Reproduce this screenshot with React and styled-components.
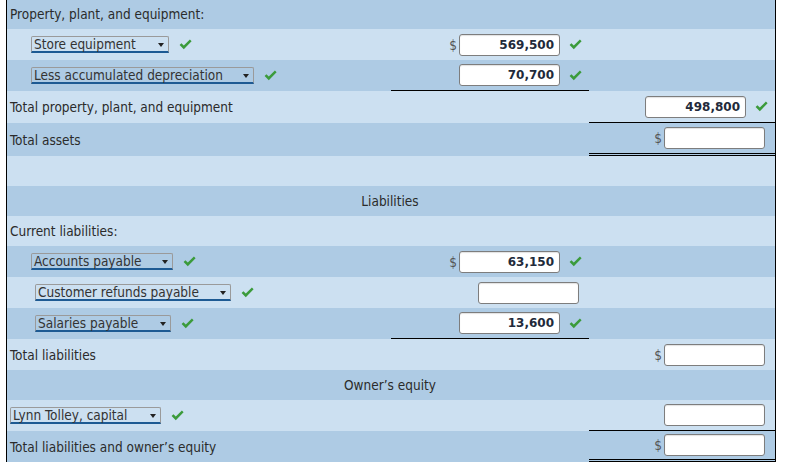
import React from 'react';
import styled, { createGlobalStyle } from 'styled-components';

const GlobalStyle = createGlobalStyle`
  body {
    margin: 0;
    background: #ffffff;
    font-family: "DejaVu Sans Condensed", "DejaVu Sans", sans-serif;
    font-size: 13.5px;
    color: #2b2b2b;
  }
`;

const DARK = '#aecbe4';
const LIGHT = '#cce0f1';

const Sheet = styled.div`
  width: 770px;
  margin: -2px 0 0 6px;
  border-left: 1px solid #000;
  border-right: 1px solid #000;
  box-sizing: border-box;
`;

const Row = styled.div`
  display: grid;
  grid-template-columns: 384px 198px 186px;
  height: ${props => props.$h}px;
  background: ${props => (props.$dark ? DARK : LIGHT)};
`;

const Heading = styled.div`
  grid-column: 1 / span 3;
  display: flex;
  align-items: center;
  justify-content: center;
  padding-right: 2px;
`;

const LabelCell = styled.div`
  display: flex;
  align-items: center;
  padding-left: ${props => props.$indent}px;
  white-space: nowrap;
`;

const AmountCell = styled.div`
  display: flex;
  align-items: center;
  justify-content: flex-end;
  box-sizing: border-box;
  padding-right: ${props => (props.$checked ? 7 : 10)}px;
  border-bottom: ${props =>
    props.$rule === 'double' ? '3px double #000' : props.$rule === 'single' ? '1px solid #000' : 'none'};
`;

const Dropdown = styled.div`
  position: relative;
  width: ${props => props.$w}px;
  height: 17px;
  box-sizing: border-box;
  padding: 0 14px 0 2px;
  display: flex;
  align-items: center;
  border: 1px solid #9a9a9a;
  border-bottom: 2px solid #1d5a93;
  border-radius: 2px 2px 0 0;
  color: #333;
  line-height: 15px;

  &::after {
    content: '';
    position: absolute;
    right: 4px;
    top: 6px;
    border-left: 3px solid transparent;
    border-right: 3px solid transparent;
    border-top: 4px solid #222;
  }
`;

const Dollar = styled.span`
  color: #555;
  margin-right: 2px;
`;

const Field = styled.div`
  width: 101px;
  height: 22px;
  box-sizing: border-box;
  background: #fff;
  border: 1px solid #7d7d7d;
  border-radius: 3px;
  box-shadow: inset 0 1px 1px rgba(0, 0, 0, 0.12);
  display: flex;
  align-items: center;
  justify-content: flex-end;
  padding-right: 5px;
  font-family: "DejaVu Sans", sans-serif;
  font-size: 12px;
  font-weight: bold;
  color: #222a3a;
`;

const CheckMark = styled.svg`
  width: 13px;
  height: 11px;
  margin-left: ${props => props.$gap}px;
  flex: none;
`;

const Check = ({ gap = 10 }) => (
  <CheckMark $gap={gap} viewBox="0 0 13 11">
    <path d="M0.6 6 L2.4 4.2 L4.8 6.6 L10.9 0.6 L12.6 2.3 L4.8 10.2 Z" fill="#3b9b3b" />
  </CheckMark>
);

const Amount = ({ value, dollar, checked, rule }) => (
  <AmountCell $checked={checked} $rule={rule}>
    {value !== undefined && (
      <>
        {dollar && <Dollar>$</Dollar>}
        <Field>{value}</Field>
        {checked && <Check gap={9} />}
      </>
    )}
  </AmountCell>
);

const Label = ({ text, select, indent = 3, w }) => (
  <LabelCell $indent={indent}>
    {select ? (
      <>
        <Dropdown $w={w}>{text}</Dropdown>
        <Check gap={10} />
      </>
    ) : (
      text
    )}
  </LabelCell>
);

const rows = [
  { h: 31, dark: true, label: { text: 'Property, plant, and equipment:' } },
  {
    h: 31,
    label: { text: 'Store equipment', select: true, indent: 24, w: 138 },
    mid: { value: '569,500', dollar: true, checked: true },
  },
  {
    h: 31,
    dark: true,
    label: { text: 'Less accumulated depreciation', select: true, indent: 24, w: 223 },
    mid: { value: '70,700', checked: true, rule: 'single' },
  },
  {
    h: 32,
    label: { text: 'Total property, plant, and equipment' },
    end: { value: '498,800', checked: true, rule: 'single' },
  },
  { h: 33, dark: true, label: { text: 'Total assets' }, end: { value: '', dollar: true, rule: 'double' } },
  { h: 30 },
  { h: 30, dark: true, heading: 'Liabilities' },
  { h: 30, label: { text: 'Current liabilities:' } },
  {
    h: 31,
    dark: true,
    label: { text: 'Accounts payable', select: true, indent: 24, w: 142 },
    mid: { value: '63,150', dollar: true, checked: true },
  },
  {
    h: 31,
    label: { text: 'Customer refunds payable', select: true, indent: 28, w: 196 },
    mid: { value: '' },
  },
  {
    h: 31,
    dark: true,
    label: { text: 'Salaries payable', select: true, indent: 28, w: 136 },
    mid: { value: '13,600', checked: true, rule: 'single' },
  },
  { h: 31, label: { text: 'Total liabilities' }, end: { value: '', dollar: true } },
  { h: 30, dark: true, heading: 'Owner’s equity' },
  {
    h: 31,
    label: { text: 'Lynn Tolley, capital', select: true, indent: 3, w: 151 },
    end: { value: '', rule: 'single' },
  },
  {
    h: 31,
    dark: true,
    label: { text: 'Total liabilities and owner’s equity' },
    end: { value: '', dollar: true, rule: 'double' },
  },
];

export default function App() {
  return (
    <>
      <GlobalStyle />
      <Sheet>
        {rows.map((row, i) => (
          <Row key={i} $h={row.h} $dark={row.dark}>
            {row.heading ? (
              <Heading>{row.heading}</Heading>
            ) : (
              <>
                <Label {...(row.label || { text: '' })} />
                <Amount {...(row.mid || {})} />
                <Amount {...(row.end || {})} />
              </>
            )}
          </Row>
        ))}
      </Sheet>
    </>
  );
}
